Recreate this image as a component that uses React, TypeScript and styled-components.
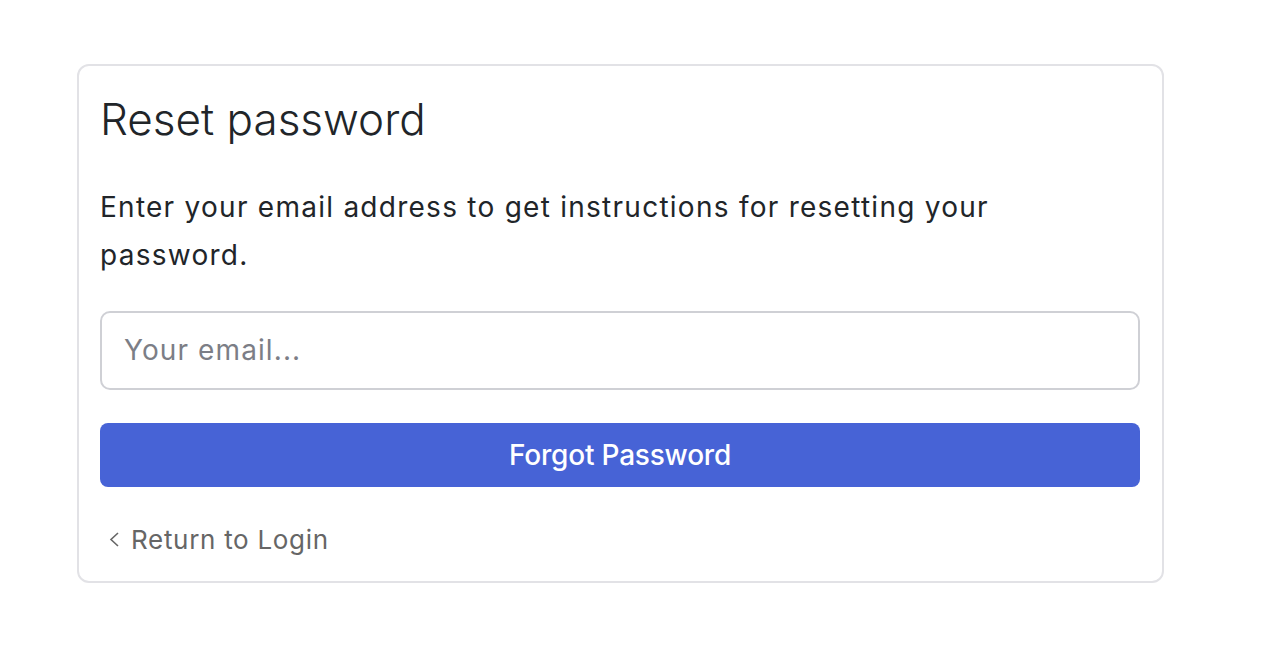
import React from "react";
import styled, { createGlobalStyle } from "styled-components";

const Global = createGlobalStyle`
  html, body { margin: 0; padding: 0; background: #ffffff; }
  body { font-family: Inter, "Noto Sans", sans-serif; color: #212529; }
  * { box-sizing: border-box; }
`;

const Page = styled.div`
  padding: 64px 0 0 77px;
`;

const Card = styled.div`
  width: 1087px;
  border: 2px solid #e2e2e6;
  border-radius: 12px;
  padding: 27px 22px 22px 21px;
  display: flex;
  flex-direction: column;
`;

const Title = styled.h1`
  margin: 0;
  font-size: 44px;
  font-weight: 300;
  line-height: 1.2;
  color: #212529;
`;

const Text = styled.p`
  margin: 37px 0 0;
  padding-right: 14px;
  font-size: 28px;
  line-height: 48px;
  letter-spacing: 1.26px;
  color: #212529;
`;

const Input = styled.input`
  margin-top: 32px;
  height: 79px;
  width: 100%;
  border: 2px solid #cfd0d5;
  border-radius: 10px;
  padding: 0 22px;
  font-family: inherit;
  font-size: 28px;
  letter-spacing: 1.1px;
  color: #212529;
  outline: none;
  &::placeholder { color: #7c7e86; }
`;

const Button = styled.button`
  margin-top: 33px;
  height: 64px;
  width: 100%;
  border: none;
  border-radius: 8px;
  background: #4763d6;
  color: #ffffff;
  font-family: inherit;
  font-size: 28px;
  font-weight: 500;
  letter-spacing: -0.2px;
`;

const Back = styled.a`
  margin-top: 33px;
  display: flex;
  align-items: center;
  gap: 11px;
  padding-left: 9px;
  font-size: 26px;
  line-height: 39px;
  letter-spacing: 0.7px;
  color: #666666;
  text-decoration: none;
`;

export default function App() {
  return (
    <>
      <Global />
      <Page>
        <Card>
          <Title>Reset password</Title>
          <Text>Enter your email address to get instructions for resetting your password.</Text>
          <Input placeholder="Your email..." />
          <Button>Forgot Password</Button>
          <Back href="#">
            <svg width="11" height="15" viewBox="0 0 11 15" fill="none">
              <path d="M9 1 L2 7.5 L9 14" stroke="#666" strokeWidth="1.6" />
            </svg>
            Return to Login
          </Back>
        </Card>
      </Page>
    </>
  );
}
